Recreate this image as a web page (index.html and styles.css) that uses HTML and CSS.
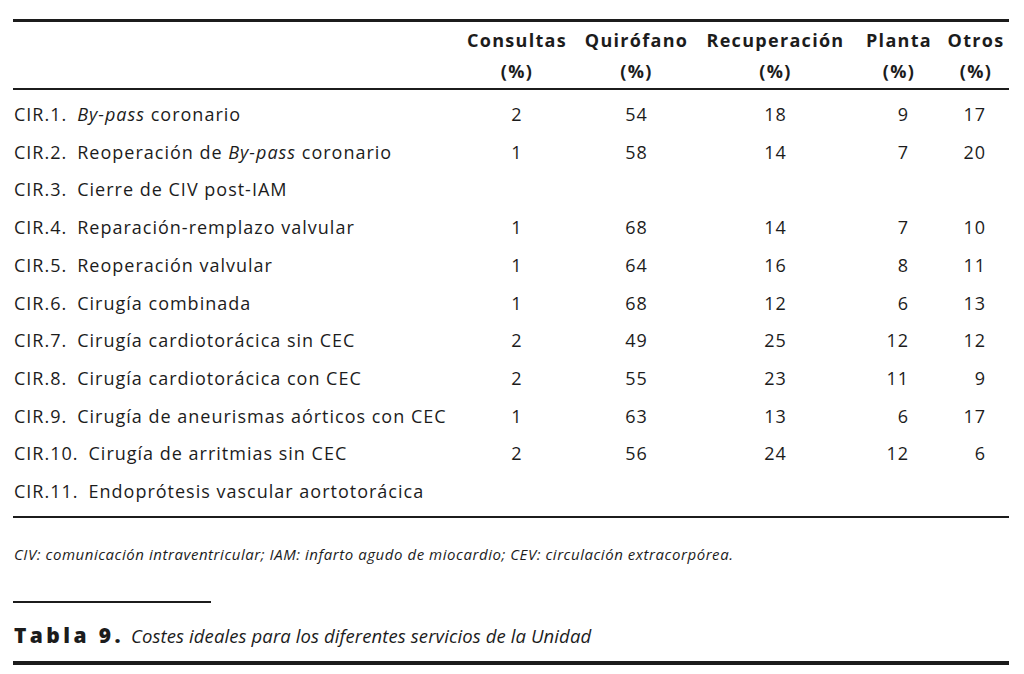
FILE: index.html
```html
<!DOCTYPE html>
<html lang="es">
<head>
<meta charset="utf-8">
<title>Tabla 9</title>
<link rel="stylesheet" href="styles.css">
</head>
<body>
<div class="page">
  <table class="costs">
    <colgroup>
      <col class="c-name">
      <col class="c-cons">
      <col class="c-quir">
      <col class="c-recu">
      <col class="c-plan">
      <col class="c-otro">
    </colgroup>
    <thead>
      <tr>
        <th class="name"></th>
        <th>Consultas<br>(%)</th>
        <th>Quirófano<br>(%)</th>
        <th>Recuperación<br>(%)</th>
        <th>Planta<br>(%)</th>
        <th class="last">Otros<br>(%)</th>
      </tr>
    </thead>
    <tbody>
      <tr><td class="name"><span class="code">CIR.1.</span><i>By-pass</i> coronario</td><td class="mid">2</td><td class="mid">54</td><td class="mid">18</td><td class="pl">9</td><td class="ot">17</td></tr>
      <tr><td class="name"><span class="code">CIR.2.</span>Reoperación de <i>By-pass</i> coronario</td><td class="mid">1</td><td class="mid">58</td><td class="mid">14</td><td class="pl">7</td><td class="ot">20</td></tr>
      <tr><td class="name"><span class="code">CIR.3.</span>Cierre de CIV post-IAM</td><td class="mid"></td><td class="mid"></td><td class="mid"></td><td class="pl"></td><td class="ot"></td></tr>
      <tr><td class="name"><span class="code">CIR.4.</span>Reparación-remplazo valvular</td><td class="mid">1</td><td class="mid">68</td><td class="mid">14</td><td class="pl">7</td><td class="ot">10</td></tr>
      <tr><td class="name"><span class="code">CIR.5.</span>Reoperación valvular</td><td class="mid">1</td><td class="mid">64</td><td class="mid">16</td><td class="pl">8</td><td class="ot">11</td></tr>
      <tr><td class="name"><span class="code">CIR.6.</span>Cirugía combinada</td><td class="mid">1</td><td class="mid">68</td><td class="mid">12</td><td class="pl">6</td><td class="ot">13</td></tr>
      <tr><td class="name"><span class="code">CIR.7.</span>Cirugía cardiotorácica sin CEC</td><td class="mid">2</td><td class="mid">49</td><td class="mid">25</td><td class="pl">12</td><td class="ot">12</td></tr>
      <tr><td class="name"><span class="code">CIR.8.</span>Cirugía cardiotorácica con CEC</td><td class="mid">2</td><td class="mid">55</td><td class="mid">23</td><td class="pl">11</td><td class="ot">9</td></tr>
      <tr><td class="name"><span class="code">CIR.9.</span>Cirugía de aneurismas aórticos con CEC</td><td class="mid">1</td><td class="mid">63</td><td class="mid">13</td><td class="pl">6</td><td class="ot">17</td></tr>
      <tr><td class="name"><span class="code">CIR.10.</span>Cirugía de arritmias sin CEC</td><td class="mid">2</td><td class="mid">56</td><td class="mid">24</td><td class="pl">12</td><td class="ot">6</td></tr>
      <tr><td class="name"><span class="code">CIR.11.</span>Endoprótesis vascular aortotorácica</td><td class="mid"></td><td class="mid"></td><td class="mid"></td><td class="pl"></td><td class="ot"></td></tr>
    </tbody>
  </table>
  <p class="note">CIV: comunicación intraventricular; IAM: infarto agudo de miocardio; CEV: circulación extracorpórea.</p>
  <div class="rule-short"></div>
  <p class="caption"><b>Tabla 9.</b><i>Costes ideales para los diferentes servicios de la Unidad</i></p>
</div>
</body>
</html>
```
FILE: styles.css
```css
html, body {
  margin: 0;
  padding: 0;
  background: #ffffff;
}
body {
  font-family: "Open Sans", "Lato", "DejaVu Sans", sans-serif;
  color: #1c1c1c;
}
.page {
  width: 996px;
  padding: 19px 0 0 13px;
}
.costs {
  width: 996px;
  table-layout: fixed;
  border-collapse: collapse;
  border-top: 3px solid #1c1c1c;
  border-bottom: 2px solid #1c1c1c;
  font-size: 18px;
  letter-spacing: 1px;
}
.c-name { width: 446px; }
.c-cons { width: 116px; }
.c-quir { width: 123px; }
.c-recu { width: 155px; }
.c-plan { width: 92px; }
.c-otro { width: 64px; }

.costs thead tr {
  border-bottom: 2px solid #1c1c1c;
}
.costs th {
  font-weight: 700;
  font-size: 18px;
  letter-spacing: 1.3px;
  text-align: center;
  line-height: 31px;
  padding: 3px 0 1px;
  white-space: nowrap;
}
.costs th.last {
  padding-right: 2px;
}
.costs tbody tr {
  height: 37.7px;
}
.costs tbody tr:first-child td {
  padding-top: 6px;
}
.costs tbody tr:last-child td {
  padding-bottom: 5px;
}
.costs td {
  padding: 0;
  line-height: 37.7px;
  white-space: nowrap;
}
.costs td.name {
  padding-left: 1px;
}
.code {
  display: inline-block;
  margin-right: 10px;
}
.costs td.mid { text-align: center; }
.costs td.pl { text-align: right; padding-right: 36px; }
.costs td.ot { text-align: right; padding-right: 23px; }

.note {
  margin: 26px 0 0 1px;
  font-size: 15px;
  font-style: italic;
  line-height: 20px;
  letter-spacing: 0.55px;
}
.rule-short {
  width: 198px;
  height: 2px;
  background: #1c1c1c;
  margin-top: 37px;
}
.caption {
  display: flex;
  align-items: baseline;
  margin: 20px 0 0 0;
  padding: 0 0 13px 1px;
  width: 995px;
  font-size: 18.5px;
  line-height: 24px;
  border-bottom: 4px solid #1c1c1c;
}
.caption b {
  font-weight: 800;
  font-size: 21px;
  letter-spacing: 3.4px;
  width: 117px;
}
.caption i {
  letter-spacing: 0.1px;
}
```
